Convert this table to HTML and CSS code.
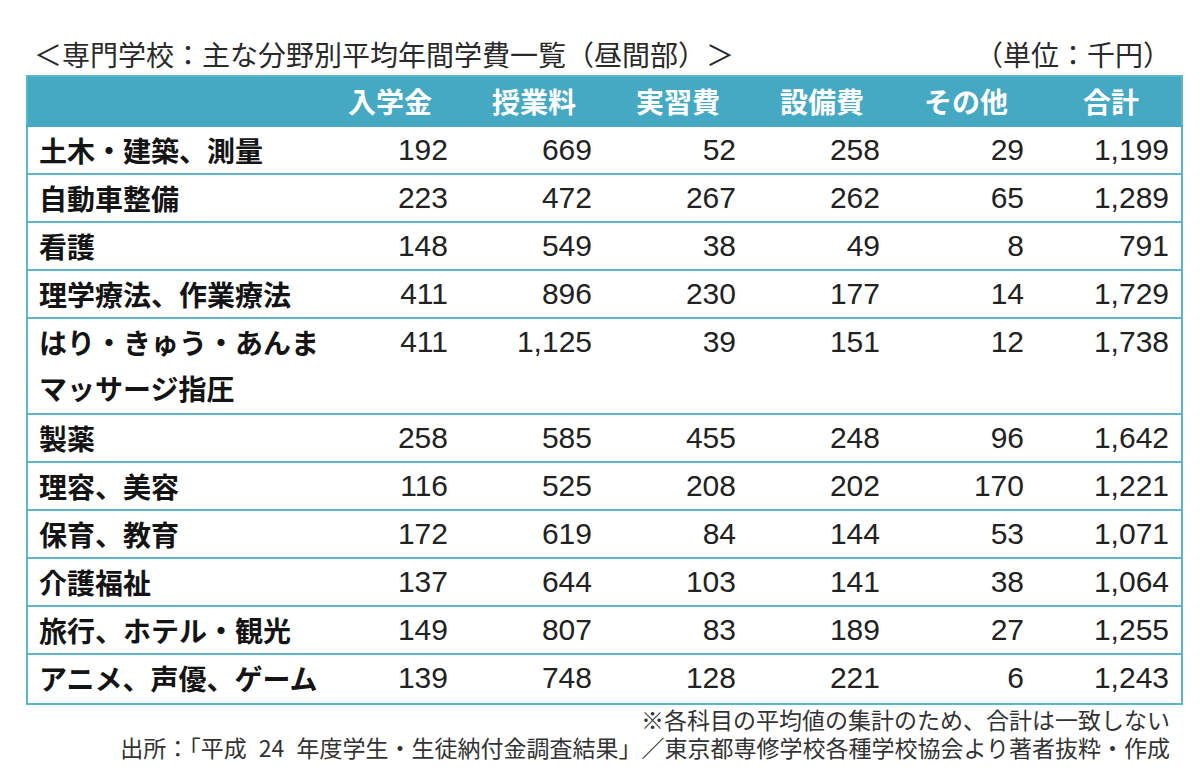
FILE: index.html
```html
<!DOCTYPE html>
<html lang="ja">
<head>
<meta charset="utf-8">
<title>専門学校：主な分野別平均年間学費一覧</title>
<link rel="stylesheet" href="styles.css">
</head>
<body>
<div class="page">
  <div class="title-row">
    <span class="title">＜専門学校：主な分野別平均年間学費一覧（昼間部）＞</span>
    <span class="unit">（単位：千円）</span>
  </div>
  <table class="fees">
    <colgroup>
      <col class="c-label">
      <col class="c-num">
      <col class="c-num">
      <col class="c-num">
      <col class="c-num">
      <col class="c-num">
      <col class="c-last">
    </colgroup>
    <thead>
      <tr>
        <th class="h-label"></th>
        <th>入学金</th>
        <th>授業料</th>
        <th>実習費</th>
        <th>設備費</th>
        <th>その他</th>
        <th class="h-last">合計</th>
      </tr>
    </thead>
    <tbody>
      <tr><td class="label">土木・建築、測量</td><td>192</td><td>669</td><td>52</td><td>258</td><td>29</td><td class="last">1,199</td></tr>
      <tr><td class="label">自動車整備</td><td>223</td><td>472</td><td>267</td><td>262</td><td>65</td><td class="last">1,289</td></tr>
      <tr><td class="label">看護</td><td>148</td><td>549</td><td>38</td><td>49</td><td>8</td><td class="last">791</td></tr>
      <tr><td class="label">理学療法、作業療法</td><td>411</td><td>896</td><td>230</td><td>177</td><td>14</td><td class="last">1,729</td></tr>
      <tr class="tall"><td class="label">はり・きゅう・あんま<br>マッサージ指圧</td><td>411</td><td>1,125</td><td>39</td><td>151</td><td>12</td><td class="last">1,738</td></tr>
      <tr><td class="label">製薬</td><td>258</td><td>585</td><td>455</td><td>248</td><td>96</td><td class="last">1,642</td></tr>
      <tr><td class="label">理容、美容</td><td>116</td><td>525</td><td>208</td><td>202</td><td>170</td><td class="last">1,221</td></tr>
      <tr><td class="label">保育、教育</td><td>172</td><td>619</td><td>84</td><td>144</td><td>53</td><td class="last">1,071</td></tr>
      <tr><td class="label">介護福祉</td><td>137</td><td>644</td><td>103</td><td>141</td><td>38</td><td class="last">1,064</td></tr>
      <tr><td class="label">旅行、ホテル・観光</td><td>149</td><td>807</td><td>83</td><td>189</td><td>27</td><td class="last">1,255</td></tr>
      <tr><td class="label">アニメ、声優、ゲーム</td><td>139</td><td>748</td><td>128</td><td>221</td><td>6</td><td class="last">1,243</td></tr>
    </tbody>
  </table>
  <div class="notes">
    <p class="note">※各科目の平均値の集計のため、合計は一致しない</p>
    <p class="note source">出所：「平成 24 年度学生・生徒納付金調査結果」／東京都専修学校各種学校協会より著者抜粋・作成</p>
  </div>
</div>
</body>
</html>
```

FILE: styles.css
```css
html, body {
  margin: 0;
  padding: 0;
  background: #ffffff;
}

body {
  font-family: "Noto Sans CJK JP", "Noto Sans", sans-serif;
  color: #1e1e1e;
}

.page {
  width: 1155px;
  margin-left: 26px;
  padding-top: 38px;
}

.title-row {
  display: flex;
  justify-content: space-between;
  align-items: center;
  height: 32px;
  margin-bottom: 5px;
  padding-left: 8px;
  font-size: 28px;
  line-height: 32px;
  color: #2a2a2a;
}

.unit {
  padding-right: 10px;
}

.fees {
  width: 1155px;
  border-collapse: collapse;
  table-layout: fixed;
  border: 2px solid #5ab6cb;
}

.c-label { width: 277px; }
.c-num { width: 144px; }
.c-last { width: 158px; }

.fees th {
  background: #45a9c3;
  color: #ffffff;
  font-weight: 700;
  font-size: 28px;
  height: 48px;
  line-height: 48px;
  padding: 0 16px 0 0;
  text-align: right;
  border-bottom: 2px solid #45a9c3;
}

.fees th.h-last {
  padding-right: 42px;
}

.fees td {
  font-family: "Liberation Sans", Arial, sans-serif;
  font-size: 30px;
  color: #222222;
  height: 46px;
  line-height: 46px;
  padding: 0;
  text-align: right;
  vertical-align: top;
  border-bottom: 2px solid #5ab6cb;
}

.fees tbody tr:last-child td {
  height: 48px;
}

.fees td.last {
  padding-right: 12px;
}

.fees td.label {
  font-family: "Noto Sans CJK JP", "Noto Sans", sans-serif;
  font-weight: 700;
  font-size: 28px;
  color: #141414;
  text-align: left;
  padding-left: 11px;
  white-space: nowrap;
}

.fees tr.tall td {
  height: 94px;
}

.notes {
  padding-right: 11px;
  text-align: right;
  font-size: 23px;
  line-height: 28px;
  color: #333333;
}

.note {
  margin: 0;
}

.source {
  word-spacing: 7px;
}
```
